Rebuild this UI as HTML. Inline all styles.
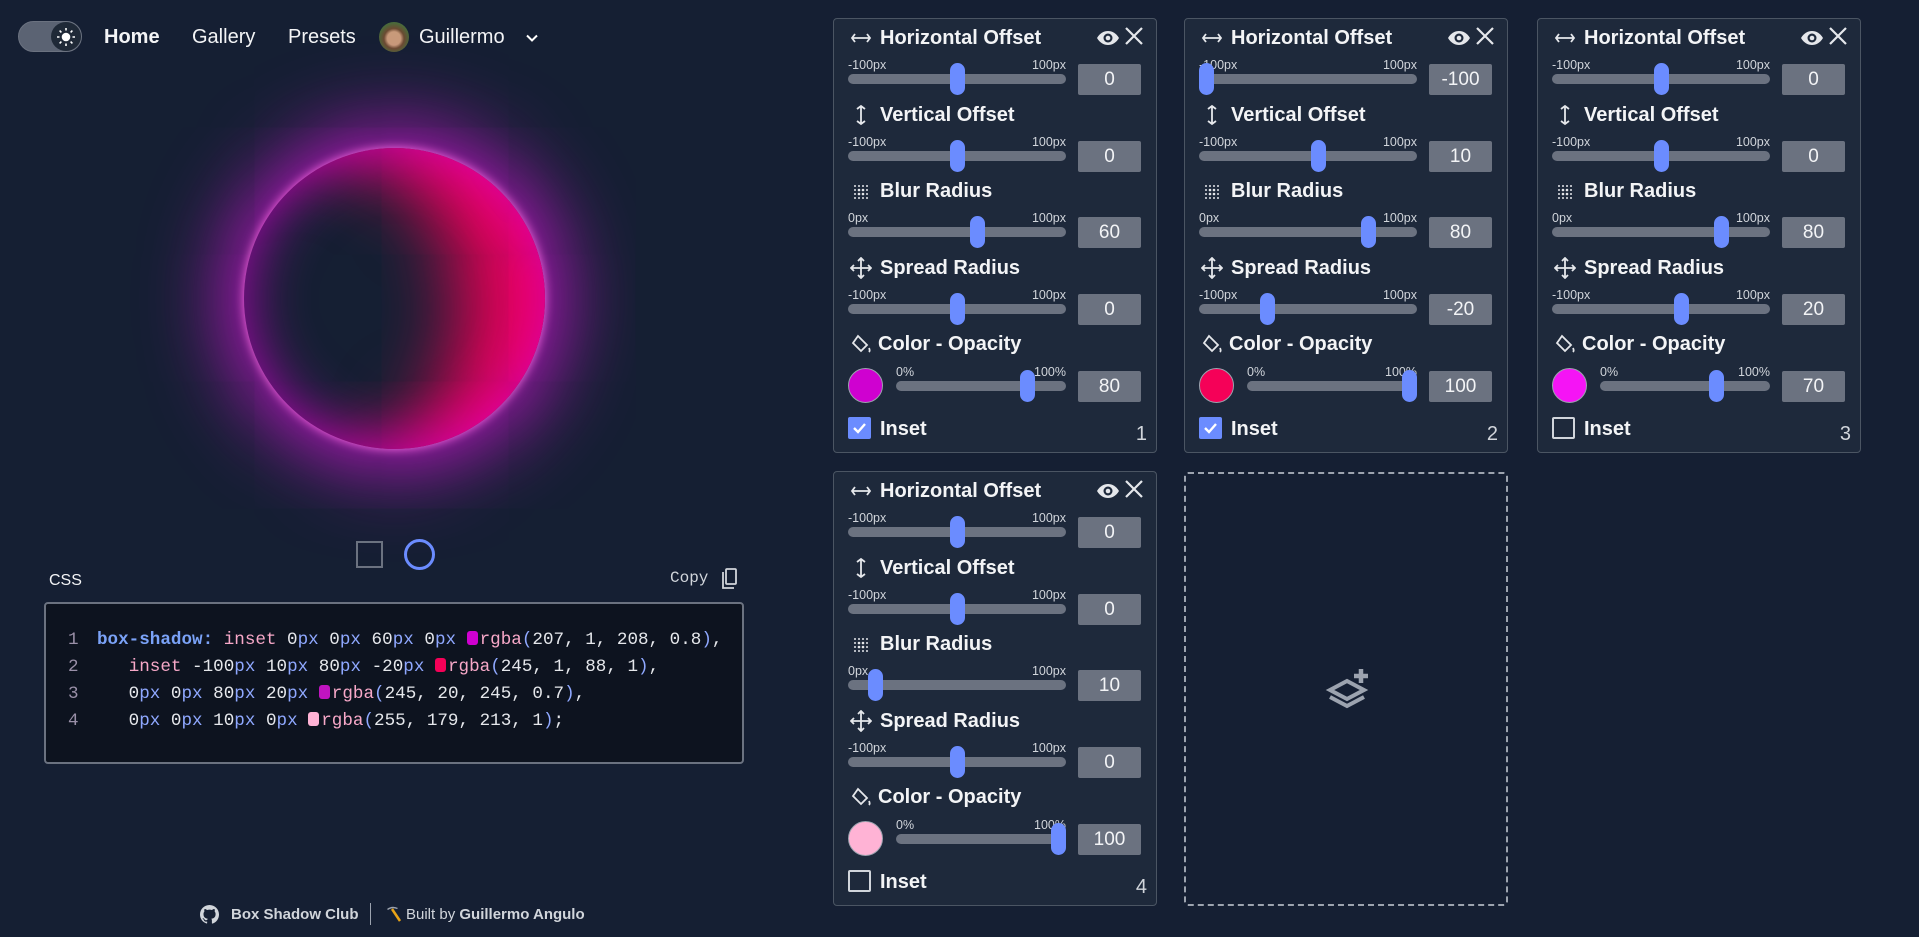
<!DOCTYPE html>
<html><head><meta charset="utf-8"><style>
*{box-sizing:border-box;margin:0;padding:0}
body{width:1919px;height:937px;background:#151f33;font-family:"Liberation Sans",sans-serif;color:#f3f4f6;position:relative;overflow:hidden}
.a{position:absolute}
.nav{position:absolute;top:25px;font-size:20px;line-height:24px;color:#f3f4f6}
.c{position:absolute;width:324px;height:435px;background:#1e293b;border:1px solid #4b5563;border-radius:4px}
.ic{position:absolute;left:16px;width:22px;height:22px}
.t{position:absolute;left:46px;font-size:20px;font-weight:bold;line-height:24px;white-space:nowrap}
.l{position:absolute;font-size:12.5px;color:#d1d5db;line-height:14px}
.tr{position:absolute;height:10px;background:#6b7280;border-radius:5px}
.th{position:absolute;width:15px;height:32px;background:#6b8cff;border-radius:8px}
.v{position:absolute;left:244px;width:63px;height:31px;background:#6b7280;border-radius:2px;text-align:center;line-height:31px;font-size:19px;color:#f3f4f6}
.sw{position:absolute;left:14px;width:35px;height:35px;border-radius:50%;border:1px solid #9ca3af}
.cb{position:absolute;left:14px;top:398px;width:23px;height:22px;border-radius:2px}
.n{position:absolute;right:9px;top:404px;font-size:20px;color:#d1d5db}
.code{font-family:"Liberation Mono",monospace;font-size:17.6px;line-height:27px;white-space:pre}
.k{color:#7aa2f7;font-weight:bold}.p{color:#f7a8c8}.u{color:#8fa8ff}.w{color:#e5e7eb}.g{color:#9a90a8}
.dot{display:inline-block;width:11px;height:14px;border-radius:3px;vertical-align:-1px;margin-right:2px}
</style></head><body>

<div class="a" style="left:18px;top:21px;width:64px;height:31px;border-radius:16px;background:#5b6373;border:1px solid #6b7280"></div>
<div class="a" style="left:51px;top:22px;width:30px;height:29px;border-radius:50%;background:#1f2937"></div>
<svg class="a" style="left:56px;top:27px" width="20" height="20" viewBox="0 0 20 20" fill="none" stroke="#fff" stroke-width="1.6"><circle cx="10" cy="10" r="3.5" fill="#fff"/><path d="M10 1v2.5M10 16.5V19M1 10h2.5M16.5 10H19M3.6 3.6l1.8 1.8M14.6 14.6l1.8 1.8M3.6 16.4l1.8-1.8M14.6 5.4l1.8-1.8"/></svg>
<div class="nav" style="left:104px;font-weight:bold">Home</div>
<div class="nav" style="left:192px">Gallery</div>
<div class="nav" style="left:288px">Presets</div>
<div class="a" style="left:379px;top:22px;width:30px;height:30px;border-radius:50%;background:radial-gradient(circle at 50% 55%,#c89a7a 0 30%,#6b4a32 45%,#4a6a3a 70%)"></div>
<div class="nav" style="left:419px">Guillermo</div>
<svg class="a" style="left:524px;top:30px" width="16" height="16" viewBox="0 0 16 16" fill="none" stroke="#fff" stroke-width="2"><path d="M3 5.5l5 5 5-5"/></svg>

<div class="a" style="left:244px;top:148px;width:301px;height:301px;border-radius:50%;box-shadow:inset 0px 0px 60px 0px rgba(207,1,208,0.8),inset -100px 10px 80px -20px rgba(245,1,88,1),0px 0px 80px 20px rgba(245,20,245,0.7),0px 0px 10px 0px rgba(255,179,213,1)"></div>
<div class="a" style="left:356px;top:541px;width:27px;height:27px;border:2px solid #6b7280"></div>
<div class="a" style="left:404px;top:539px;width:31px;height:31px;border:3px solid #6b8cff;border-radius:50%"></div>

<div class="a" style="left:49px;top:572px;font-size:16px;color:#f3f4f6">CSS</div>
<div class="a" style="left:670px;top:569px;font-size:16px;color:#d1d5db;font-family:'Liberation Mono',monospace">Copy</div>
<svg class="a" style="left:720px;top:568px" width="18" height="22" viewBox="0 0 18 22" fill="none" stroke="#d1d5db" stroke-width="1.8"><path d="M3 4v16h11"/><rect x="6" y="1" width="10" height="15" rx="1"/></svg>
<div class="a" style="left:44px;top:602px;width:700px;height:162px;background:#0d131f;border:2px solid #6b7280;border-radius:4px"></div>
<div class="a code g" style="left:68px;top:627px">1
2
3
4</div>
<div class="a code w" style="left:97px;top:627px"><span class="k">box-shadow:</span> <span class="p">inset</span> 0<span class="u">px</span> 0<span class="u">px</span> 60<span class="u">px</span> 0<span class="u">px</span> <span class="dot" style="background:#cf01d0"></span><span class="p">rgba</span><span class="u">(</span>207, 1, 208, 0.8<span class="u">)</span>,
   <span class="p">inset</span> -100<span class="u">px</span> 10<span class="u">px</span> 80<span class="u">px</span> -20<span class="u">px</span> <span class="dot" style="background:#f50158"></span><span class="p">rgba</span><span class="u">(</span>245, 1, 88, 1<span class="u">)</span>,
   0<span class="u">px</span> 0<span class="u">px</span> 80<span class="u">px</span> 20<span class="u">px</span> <span class="dot" style="background:#c014c0"></span><span class="p">rgba</span><span class="u">(</span>245, 20, 245, 0.7<span class="u">)</span>,
   0<span class="u">px</span> 0<span class="u">px</span> 10<span class="u">px</span> 0<span class="u">px</span> <span class="dot" style="background:#ffb3d5"></span><span class="p">rgba</span><span class="u">(</span>255, 179, 213, 1<span class="u">)</span>;</div>

<svg class="a" style="left:200px;top:905px" width="19" height="19" viewBox="0 0 16 16" fill="#d1d5db"><path d="M8 0C3.58 0 0 3.58 0 8c0 3.540 2.29 6.530 5.470 7.590.4.07.55-.17.55-.38v-1.330c-2.230.48-2.700-1.070-2.700-1.070-.36-.92-.89-1.170-.89-1.170-.73-.5.06-.49.06-.49.8.06 1.230.83 1.230.83.72 1.230 1.880.87 2.340.67.07-.52.28-.87.51-1.070-1.780-.2-3.640-.89-3.640-3.950 0-.87.31-1.590.82-2.150-.08-.2-.36-1.020.08-2.120 0 0 .67-.21 2.200.82a7.6 7.6 0 0 1 4 0c1.530-1.040 2.200-.82 2.200-.82.44 1.100.16 1.920.08 2.120.51.56.82 1.270.82 2.150 0 3.070-1.870 3.750-3.650 3.950.29.25.54.73.54 1.480v2.200c0 .21.15.46.55.38A8 8 0 0 0 16 8c0-4.420-3.580-8-8-8z"/></svg>
<div class="a" style="left:231px;top:906px;font-size:15px;font-weight:bold;color:#d1d5db">Box Shadow Club</div>
<div class="a" style="left:370px;top:903px;width:1px;height:22px;background:#9ca3af"></div>
<svg class="a" style="left:384px;top:905px" width="18" height="18" viewBox="0 0 18 18"><path d="M3 4 Q8 0 14 3 L13 4 Q8 2 4 5z" fill="#9ca3af"/><path d="M8 4 L16 16" stroke="#e8a317" stroke-width="2.5"/></svg>
<div class="a" style="left:406px;top:906px;font-size:15px;color:#d1d5db">Built by <b>Guillermo Angulo</b></div>

<!-- CARD 1 -->
<div class="c" style="left:833px;top:18px">
 <svg class="a" style="left:262px;top:8px" width="24" height="22" viewBox="0 0 24 22"><path d="M1 11c3-5 7-7 11-7s8 2 11 7c-3 5-7 7-11 7s-8-2-11-7z" fill="#e5e7eb"/><circle cx="12" cy="11" r="4.5" fill="#1e293b"/><circle cx="12" cy="11" r="2.3" fill="#e5e7eb"/></svg>
 <svg class="a" style="left:289px;top:6px" width="22" height="22" viewBox="0 0 22 22" stroke="#e5e7eb" stroke-width="2.2"><path d="M3 3l16 16M19 3L3 19"/></svg>
 <svg class="ic" style="top:8px" viewBox="0 0 22 22" fill="none" stroke="#e5e7eb" stroke-width="1.8"><path d="M2 11h18M5 7l-3 4 3 4M17 7l3 4-3 4"/></svg>
 <div class="t" style="top:7px">Horizontal Offset</div>
 <div class="l" style="left:14px;top:39px">-100px</div><div class="l" style="right:90px;top:39px">100px</div>
 <div class="tr" style="left:14px;top:55px;width:218px"></div><div class="th" style="left:116px;top:44px"></div>
 <div class="v" style="top:45px">0</div>
 <svg class="ic" style="top:85px" viewBox="0 0 22 22" fill="none" stroke="#e5e7eb" stroke-width="1.8"><path d="M11 2v18M7 5l4-3 4 3M7 17l4 3 4-3"/></svg>
 <div class="t" style="top:84px">Vertical Offset</div>
 <div class="l" style="left:14px;top:116px">-100px</div><div class="l" style="right:90px;top:116px">100px</div>
 <div class="tr" style="left:14px;top:132px;width:218px"></div><div class="th" style="left:116px;top:121px"></div>
 <div class="v" style="top:122px">0</div>
 <svg class="ic" style="top:162px" viewBox="0 0 22 22" fill="#e5e7eb"><g><circle cx="5" cy="5" r="1"/><circle cx="9" cy="5" r="1"/><circle cx="13" cy="5" r="1"/><circle cx="17" cy="5" r="1"/><circle cx="5" cy="9" r="1"/><circle cx="9" cy="9" r="1.3"/><circle cx="13" cy="9" r="1.3"/><circle cx="17" cy="9" r="1"/><circle cx="5" cy="13" r="1"/><circle cx="9" cy="13" r="1.3"/><circle cx="13" cy="13" r="1.3"/><circle cx="17" cy="13" r="1"/><circle cx="5" cy="17" r="1"/><circle cx="9" cy="17" r="1"/><circle cx="13" cy="17" r="1"/><circle cx="17" cy="17" r="1"/></g></svg>
 <div class="t" style="top:160px">Blur Radius</div>
 <div class="l" style="left:14px;top:192px">0px</div><div class="l" style="right:90px;top:192px">100px</div>
 <div class="tr" style="left:14px;top:208px;width:218px"></div><div class="th" style="left:136px;top:197px"></div>
 <div class="v" style="top:198px">60</div>
 <svg class="ic" style="top:238px" viewBox="0 0 22 22" fill="none" stroke="#e5e7eb" stroke-width="1.8"><path d="M11 1v20M1 11h20M8 4l3-3 3 3M8 18l3 3 3-3M4 8l-3 3 3 3M18 8l3 3-3 3"/></svg>
 <div class="t" style="top:237px">Spread Radius</div>
 <div class="l" style="left:14px;top:269px">-100px</div><div class="l" style="right:90px;top:269px">100px</div>
 <div class="tr" style="left:14px;top:285px;width:218px"></div><div class="th" style="left:116px;top:274px"></div>
 <div class="v" style="top:275px">0</div>
 <svg class="ic" style="top:314px" viewBox="0 0 22 22" fill="none" stroke="#e5e7eb" stroke-width="1.8"><path d="M8 3l9 9-6 6-8-8z"/><path d="M19 15c1 2 1 3 0 4" fill="#e5e7eb"/></svg>
 <div class="t" style="top:313px;left:44px">Color - Opacity</div>
 <div class="sw" style="top:349px;background:#cf01d0"></div>
 <div class="l" style="left:62px;top:346px">0%</div><div class="l" style="right:90px;top:346px">100%</div>
 <div class="tr" style="left:62px;top:362px;width:170px"></div><div class="th" style="left:186px;top:351px"></div>
 <div class="v" style="top:352px">80</div>
 <div class="cb" style="background:#6b8cff"><svg width="23" height="22" viewBox="0 0 23 22" fill="none" stroke="#fff" stroke-width="2.4"><path d="M6 11l4 4 7-8"/></svg></div>
 <div class="t" style="top:398px">Inset</div>
 <div class="n">1</div>
</div>

<!-- CARD 2 -->
<div class="c" style="left:1184px;top:18px">
 <svg class="a" style="left:262px;top:8px" width="24" height="22" viewBox="0 0 24 22"><path d="M1 11c3-5 7-7 11-7s8 2 11 7c-3 5-7 7-11 7s-8-2-11-7z" fill="#e5e7eb"/><circle cx="12" cy="11" r="4.5" fill="#1e293b"/><circle cx="12" cy="11" r="2.3" fill="#e5e7eb"/></svg>
 <svg class="a" style="left:289px;top:6px" width="22" height="22" viewBox="0 0 22 22" stroke="#e5e7eb" stroke-width="2.2"><path d="M3 3l16 16M19 3L3 19"/></svg>
 <svg class="ic" style="top:8px" viewBox="0 0 22 22" fill="none" stroke="#e5e7eb" stroke-width="1.8"><path d="M2 11h18M5 7l-3 4 3 4M17 7l3 4-3 4"/></svg>
 <div class="t" style="top:7px">Horizontal Offset</div>
 <div class="l" style="left:14px;top:39px">-100px</div><div class="l" style="right:90px;top:39px">100px</div>
 <div class="tr" style="left:14px;top:55px;width:218px"></div><div class="th" style="left:14px;top:44px"></div>
 <div class="v" style="top:45px">-100</div>
 <svg class="ic" style="top:85px" viewBox="0 0 22 22" fill="none" stroke="#e5e7eb" stroke-width="1.8"><path d="M11 2v18M7 5l4-3 4 3M7 17l4 3 4-3"/></svg>
 <div class="t" style="top:84px">Vertical Offset</div>
 <div class="l" style="left:14px;top:116px">-100px</div><div class="l" style="right:90px;top:116px">100px</div>
 <div class="tr" style="left:14px;top:132px;width:218px"></div><div class="th" style="left:126px;top:121px"></div>
 <div class="v" style="top:122px">10</div>
 <svg class="ic" style="top:162px" viewBox="0 0 22 22" fill="#e5e7eb"><g><circle cx="5" cy="5" r="1"/><circle cx="9" cy="5" r="1"/><circle cx="13" cy="5" r="1"/><circle cx="17" cy="5" r="1"/><circle cx="5" cy="9" r="1"/><circle cx="9" cy="9" r="1.3"/><circle cx="13" cy="9" r="1.3"/><circle cx="17" cy="9" r="1"/><circle cx="5" cy="13" r="1"/><circle cx="9" cy="13" r="1.3"/><circle cx="13" cy="13" r="1.3"/><circle cx="17" cy="13" r="1"/><circle cx="5" cy="17" r="1"/><circle cx="9" cy="17" r="1"/><circle cx="13" cy="17" r="1"/><circle cx="17" cy="17" r="1"/></g></svg>
 <div class="t" style="top:160px">Blur Radius</div>
 <div class="l" style="left:14px;top:192px">0px</div><div class="l" style="right:90px;top:192px">100px</div>
 <div class="tr" style="left:14px;top:208px;width:218px"></div><div class="th" style="left:176px;top:197px"></div>
 <div class="v" style="top:198px">80</div>
 <svg class="ic" style="top:238px" viewBox="0 0 22 22" fill="none" stroke="#e5e7eb" stroke-width="1.8"><path d="M11 1v20M1 11h20M8 4l3-3 3 3M8 18l3 3 3-3M4 8l-3 3 3 3M18 8l3 3-3 3"/></svg>
 <div class="t" style="top:237px">Spread Radius</div>
 <div class="l" style="left:14px;top:269px">-100px</div><div class="l" style="right:90px;top:269px">100px</div>
 <div class="tr" style="left:14px;top:285px;width:218px"></div><div class="th" style="left:75px;top:274px"></div>
 <div class="v" style="top:275px">-20</div>
 <svg class="ic" style="top:314px" viewBox="0 0 22 22" fill="none" stroke="#e5e7eb" stroke-width="1.8"><path d="M8 3l9 9-6 6-8-8z"/><path d="M19 15c1 2 1 3 0 4" fill="#e5e7eb"/></svg>
 <div class="t" style="top:313px;left:44px">Color - Opacity</div>
 <div class="sw" style="top:349px;background:#f50158"></div>
 <div class="l" style="left:62px;top:346px">0%</div><div class="l" style="right:90px;top:346px">100%</div>
 <div class="tr" style="left:62px;top:362px;width:170px"></div><div class="th" style="left:217px;top:351px"></div>
 <div class="v" style="top:352px">100</div>
 <div class="cb" style="background:#6b8cff"><svg width="23" height="22" viewBox="0 0 23 22" fill="none" stroke="#fff" stroke-width="2.4"><path d="M6 11l4 4 7-8"/></svg></div>
 <div class="t" style="top:398px">Inset</div>
 <div class="n">2</div>
</div>

<!-- CARD 3 -->
<div class="c" style="left:1537px;top:18px">
 <svg class="a" style="left:262px;top:8px" width="24" height="22" viewBox="0 0 24 22"><path d="M1 11c3-5 7-7 11-7s8 2 11 7c-3 5-7 7-11 7s-8-2-11-7z" fill="#e5e7eb"/><circle cx="12" cy="11" r="4.5" fill="#1e293b"/><circle cx="12" cy="11" r="2.3" fill="#e5e7eb"/></svg>
 <svg class="a" style="left:289px;top:6px" width="22" height="22" viewBox="0 0 22 22" stroke="#e5e7eb" stroke-width="2.2"><path d="M3 3l16 16M19 3L3 19"/></svg>
 <svg class="ic" style="top:8px" viewBox="0 0 22 22" fill="none" stroke="#e5e7eb" stroke-width="1.8"><path d="M2 11h18M5 7l-3 4 3 4M17 7l3 4-3 4"/></svg>
 <div class="t" style="top:7px">Horizontal Offset</div>
 <div class="l" style="left:14px;top:39px">-100px</div><div class="l" style="right:90px;top:39px">100px</div>
 <div class="tr" style="left:14px;top:55px;width:218px"></div><div class="th" style="left:116px;top:44px"></div>
 <div class="v" style="top:45px">0</div>
 <svg class="ic" style="top:85px" viewBox="0 0 22 22" fill="none" stroke="#e5e7eb" stroke-width="1.8"><path d="M11 2v18M7 5l4-3 4 3M7 17l4 3 4-3"/></svg>
 <div class="t" style="top:84px">Vertical Offset</div>
 <div class="l" style="left:14px;top:116px">-100px</div><div class="l" style="right:90px;top:116px">100px</div>
 <div class="tr" style="left:14px;top:132px;width:218px"></div><div class="th" style="left:116px;top:121px"></div>
 <div class="v" style="top:122px">0</div>
 <svg class="ic" style="top:162px" viewBox="0 0 22 22" fill="#e5e7eb"><g><circle cx="5" cy="5" r="1"/><circle cx="9" cy="5" r="1"/><circle cx="13" cy="5" r="1"/><circle cx="17" cy="5" r="1"/><circle cx="5" cy="9" r="1"/><circle cx="9" cy="9" r="1.3"/><circle cx="13" cy="9" r="1.3"/><circle cx="17" cy="9" r="1"/><circle cx="5" cy="13" r="1"/><circle cx="9" cy="13" r="1.3"/><circle cx="13" cy="13" r="1.3"/><circle cx="17" cy="13" r="1"/><circle cx="5" cy="17" r="1"/><circle cx="9" cy="17" r="1"/><circle cx="13" cy="17" r="1"/><circle cx="17" cy="17" r="1"/></g></svg>
 <div class="t" style="top:160px">Blur Radius</div>
 <div class="l" style="left:14px;top:192px">0px</div><div class="l" style="right:90px;top:192px">100px</div>
 <div class="tr" style="left:14px;top:208px;width:218px"></div><div class="th" style="left:176px;top:197px"></div>
 <div class="v" style="top:198px">80</div>
 <svg class="ic" style="top:238px" viewBox="0 0 22 22" fill="none" stroke="#e5e7eb" stroke-width="1.8"><path d="M11 1v20M1 11h20M8 4l3-3 3 3M8 18l3 3 3-3M4 8l-3 3 3 3M18 8l3 3-3 3"/></svg>
 <div class="t" style="top:237px">Spread Radius</div>
 <div class="l" style="left:14px;top:269px">-100px</div><div class="l" style="right:90px;top:269px">100px</div>
 <div class="tr" style="left:14px;top:285px;width:218px"></div><div class="th" style="left:136px;top:274px"></div>
 <div class="v" style="top:275px">20</div>
 <svg class="ic" style="top:314px" viewBox="0 0 22 22" fill="none" stroke="#e5e7eb" stroke-width="1.8"><path d="M8 3l9 9-6 6-8-8z"/><path d="M19 15c1 2 1 3 0 4" fill="#e5e7eb"/></svg>
 <div class="t" style="top:313px;left:44px">Color - Opacity</div>
 <div class="sw" style="top:349px;background:#f514f5"></div>
 <div class="l" style="left:62px;top:346px">0%</div><div class="l" style="right:90px;top:346px">100%</div>
 <div class="tr" style="left:62px;top:362px;width:170px"></div><div class="th" style="left:171px;top:351px"></div>
 <div class="v" style="top:352px">70</div>
 <div class="cb" style="border:2px solid #d1d5db"></div>
 <div class="t" style="top:398px">Inset</div>
 <div class="n">3</div>
</div>

<!-- CARD 4 -->
<div class="c" style="left:833px;top:471px">
 <svg class="a" style="left:262px;top:8px" width="24" height="22" viewBox="0 0 24 22"><path d="M1 11c3-5 7-7 11-7s8 2 11 7c-3 5-7 7-11 7s-8-2-11-7z" fill="#e5e7eb"/><circle cx="12" cy="11" r="4.5" fill="#1e293b"/><circle cx="12" cy="11" r="2.3" fill="#e5e7eb"/></svg>
 <svg class="a" style="left:289px;top:6px" width="22" height="22" viewBox="0 0 22 22" stroke="#e5e7eb" stroke-width="2.2"><path d="M3 3l16 16M19 3L3 19"/></svg>
 <svg class="ic" style="top:8px" viewBox="0 0 22 22" fill="none" stroke="#e5e7eb" stroke-width="1.8"><path d="M2 11h18M5 7l-3 4 3 4M17 7l3 4-3 4"/></svg>
 <div class="t" style="top:7px">Horizontal Offset</div>
 <div class="l" style="left:14px;top:39px">-100px</div><div class="l" style="right:90px;top:39px">100px</div>
 <div class="tr" style="left:14px;top:55px;width:218px"></div><div class="th" style="left:116px;top:44px"></div>
 <div class="v" style="top:45px">0</div>
 <svg class="ic" style="top:85px" viewBox="0 0 22 22" fill="none" stroke="#e5e7eb" stroke-width="1.8"><path d="M11 2v18M7 5l4-3 4 3M7 17l4 3 4-3"/></svg>
 <div class="t" style="top:84px">Vertical Offset</div>
 <div class="l" style="left:14px;top:116px">-100px</div><div class="l" style="right:90px;top:116px">100px</div>
 <div class="tr" style="left:14px;top:132px;width:218px"></div><div class="th" style="left:116px;top:121px"></div>
 <div class="v" style="top:122px">0</div>
 <svg class="ic" style="top:162px" viewBox="0 0 22 22" fill="#e5e7eb"><g><circle cx="5" cy="5" r="1"/><circle cx="9" cy="5" r="1"/><circle cx="13" cy="5" r="1"/><circle cx="17" cy="5" r="1"/><circle cx="5" cy="9" r="1"/><circle cx="9" cy="9" r="1.3"/><circle cx="13" cy="9" r="1.3"/><circle cx="17" cy="9" r="1"/><circle cx="5" cy="13" r="1"/><circle cx="9" cy="13" r="1.3"/><circle cx="13" cy="13" r="1.3"/><circle cx="17" cy="13" r="1"/><circle cx="5" cy="17" r="1"/><circle cx="9" cy="17" r="1"/><circle cx="13" cy="17" r="1"/><circle cx="17" cy="17" r="1"/></g></svg>
 <div class="t" style="top:160px">Blur Radius</div>
 <div class="l" style="left:14px;top:192px">0px</div><div class="l" style="right:90px;top:192px">100px</div>
 <div class="tr" style="left:14px;top:208px;width:218px"></div><div class="th" style="left:34px;top:197px"></div>
 <div class="v" style="top:198px">10</div>
 <svg class="ic" style="top:238px" viewBox="0 0 22 22" fill="none" stroke="#e5e7eb" stroke-width="1.8"><path d="M11 1v20M1 11h20M8 4l3-3 3 3M8 18l3 3 3-3M4 8l-3 3 3 3M18 8l3 3-3 3"/></svg>
 <div class="t" style="top:237px">Spread Radius</div>
 <div class="l" style="left:14px;top:269px">-100px</div><div class="l" style="right:90px;top:269px">100px</div>
 <div class="tr" style="left:14px;top:285px;width:218px"></div><div class="th" style="left:116px;top:274px"></div>
 <div class="v" style="top:275px">0</div>
 <svg class="ic" style="top:314px" viewBox="0 0 22 22" fill="none" stroke="#e5e7eb" stroke-width="1.8"><path d="M8 3l9 9-6 6-8-8z"/><path d="M19 15c1 2 1 3 0 4" fill="#e5e7eb"/></svg>
 <div class="t" style="top:313px;left:44px">Color - Opacity</div>
 <div class="sw" style="top:349px;background:#ffb3d5"></div>
 <div class="l" style="left:62px;top:346px">0%</div><div class="l" style="right:90px;top:346px">100%</div>
 <div class="tr" style="left:62px;top:362px;width:170px"></div><div class="th" style="left:217px;top:351px"></div>
 <div class="v" style="top:352px">100</div>
 <div class="cb" style="border:2px solid #d1d5db"></div>
 <div class="t" style="top:398px">Inset</div>
 <div class="n">4</div>
</div>

<div class="a" style="left:1184px;top:472px;width:324px;height:434px;border:2px dashed #9ca3af;border-radius:4px"></div>
<svg class="a" style="left:1320px;top:660px" width="56" height="56" viewBox="0 0 56 56" fill="none" stroke="#9ca3af" stroke-width="4"><path d="M10 30l17-9 17 9-17 9z"/><path d="M10 37l17 9 17-9"/><path d="M41 9v14M34 16h14" stroke-width="4.5"/></svg>

</body></html>
